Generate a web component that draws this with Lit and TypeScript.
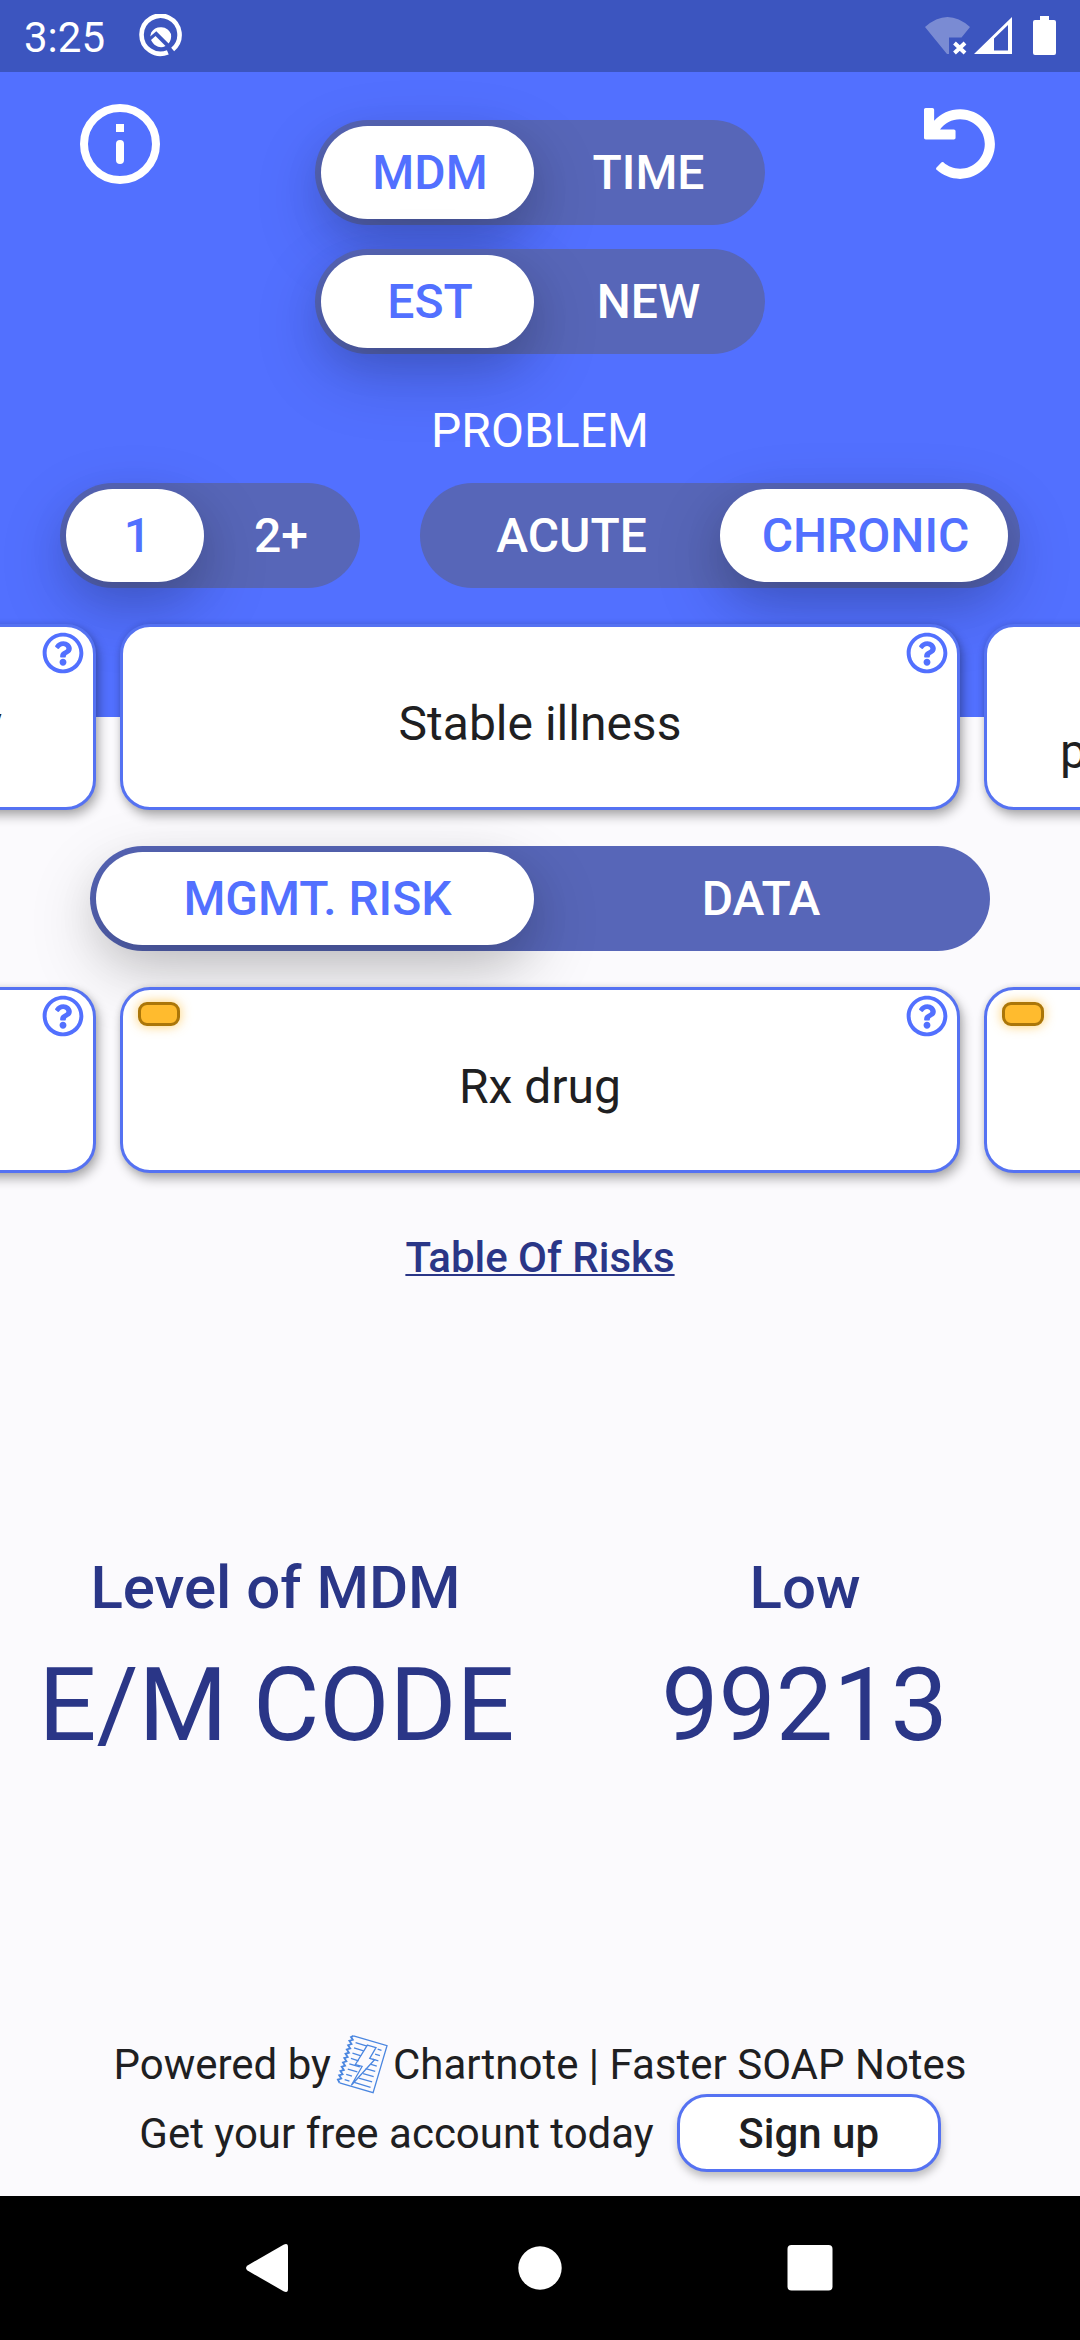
import { LitElement, html, css, svg } from "lit";
import { customElement, property } from "lit/decorators.js";
import { classMap } from "lit/directives/class-map.js";

const helpPath =
  "M256 8C119.043 8 8 119.083 8 256c0 136.997 111.043 248 248 248s248-111.003 248-248C504 119.083 392.957 8 256 8zm0 448c-110.532 0-200-89.431-200-200 0-110.495 89.472-200 200-200 110.491 0 200 89.471 200 200 0 110.53-89.431 200-200 200zm107.244-255.2c0 67.052-72.421 68.084-72.421 92.863V300c0 6.627-5.373 12-12 12h-45.647c-6.627 0-12-5.373-12-12v-8.659c0-35.745 27.1-50.034 47.579-61.516 17.561-9.845 28.324-16.541 28.324-29.579 0-17.246-21.999-28.693-39.784-28.693-23.189 0-33.894 10.977-48.942 29.969-4.057 5.12-11.46 6.071-16.666 2.124l-27.824-21.098c-5.107-3.872-6.251-11.066-2.644-16.363C184.846 131.491 214.94 112 261.794 112c49.071 0 101.45 38.304 101.45 88.8zM298 368c0 23.159-18.841 42-42 42s-42-18.841-42-42 18.841-42 42-42 42 18.841 42 42z";
const undoPath =
  "M212.333 224.333H12c-6.627 0-12-5.373-12-12V12C0 5.373 5.373 0 12 0h48c6.627 0 12 5.373 12 12v78.112C117.773 39.279 184.26 7.47 258.175 8.007c136.906.994 246.448 111.623 246.157 248.532C504.041 393.258 393.12 504 256.333 504c-64.089 0-122.496-24.313-166.51-64.215-5.099-4.622-5.334-12.554-.467-17.42l33.967-33.967c4.474-4.474 11.662-4.717 16.401-.525C170.76 415.336 211.58 432 256.333 432c97.268 0 176-78.716 176-176 0-97.267-78.716-176-176-176-58.496 0-110.28 28.476-142.274 72.333h98.274c6.627 0 12 5.373 12 12v48c0 6.627-5.373 12-12 12z";

@customElement("toggle-pill")
class TogglePill extends LitElement {
  @property() first = "";
  @property() second = "";
  @property() active = "first";
  @property() kind = "even";

  static styles = css`
    :host {
      display: block;
    }
    .track {
      box-sizing: border-box;
      height: 105px;
      border-radius: 52.5px;
      background: #5766b8;
      display: grid;
      grid-template-columns: 1fr 1fr;
      padding: 6px;
      column-gap: 12px;
      font-size: 48px;
      font-weight: 500;
      color: #fff;
    }
    .count {
      grid-template-columns: 138px 1fr;
    }
    .course {
      grid-template-columns: 1fr 288px;
      padding-right: 12px;
    }
    .option {
      display: flex;
      align-items: center;
      justify-content: center;
      border-radius: 46.5px;
      line-height: 56px;
      white-space: nowrap;
      padding-left: 5px;
    }
    .option + .option {
      padding-left: 0;
      padding-right: 8px;
    }
    .course .option {
      padding-left: 9px;
      padding-right: 0;
    }
    .course .option + .option {
      padding-left: 3px;
      padding-right: 0;
    }
    .on {
      background: #fff;
      color: #5270ff;
      box-shadow: 0 24px 72px rgba(0, 0, 0, 0.2), 0 14px 40px rgba(0, 0, 0, 0.1);
    }
  `;

  render() {
    const on = this.active === "first";
    return html`<div class=${classMap({ track: true, [this.kind]: true })}>
      <div class=${classMap({ option: true, on })}>${this.first}</div>
      <div class=${classMap({ option: true, on: !on })}>${this.second}</div>
    </div>`;
  }
}

@customElement("choice-card")
class ChoiceCard extends LitElement {
  @property() label = "";
  @property() align = "center";
  @property({ type: Boolean }) badge = false;
  @property({ type: Boolean }) help = false;

  static styles = css`
    :host {
      display: block;
    }
    .card {
      position: relative;
      box-sizing: border-box;
      width: 840px;
      height: 186px;
      border: 3px solid #5572f2;
      border-radius: 30px;
      background: #fff;
      box-shadow: 3px 6px 11px rgba(0, 0, 0, 0.3), 0 0 6px rgba(0, 0, 0, 0.1);
      display: flex;
      align-items: center;
      justify-content: center;
      padding-top: 14px;
      font-size: 48px;
      line-height: 56px;
      color: #1f1f22;
      white-space: nowrap;
    }
    .end {
      justify-content: flex-end;
      padding-right: 91px;
    }
    .start {
      justify-content: flex-start;
      padding-left: 73px;
      padding-top: 70px;
    }
    .help {
      position: absolute;
      right: 9px;
      top: 5px;
      width: 42px;
      height: 42px;
      fill: #5270ff;
    }
    .badge {
      position: absolute;
      box-sizing: border-box;
      left: 15px;
      top: 12px;
      width: 42px;
      height: 24px;
      border: 3px solid #ab7609;
      border-radius: 9px;
      background: #ffbb2e;
      box-shadow: 0 0 12px rgba(255, 187, 46, 0.7);
    }
  `;

  render() {
    return html`<div class=${classMap({ card: true, [this.align]: true })}>
      ${this.badge ? html`<span class="badge"></span>` : ""}
      <span>${this.label}</span>
      ${this.help ? html`<svg class="help" viewBox="0 0 512 512"><path d=${helpPath} /></svg>` : ""}
    </div>`;
  }
}

@customElement("app-root")
class AppRoot extends LitElement {
  static styles = css`
    :host {
      display: block;
      font-family: Roboto, "Liberation Sans", sans-serif;
    }
    .screen {
      box-sizing: border-box;
      width: 1080px;
      height: 2340px;
      overflow: hidden;
      display: flex;
      flex-direction: column;
      background: linear-gradient(#5270ff 717px, #fbfafd 717px);
      color: #1f1f22;
    }
    .status {
      flex: none;
      height: 72px;
      background: #3c55bf;
      display: flex;
      align-items: center;
      padding: 0 24px;
      color: #fff;
    }
    .time {
      font-size: 42px;
      line-height: 50px;
      padding-top: 3px;
      width: 114px;
    }
    .status svg {
      display: block;
    }
    .system {
      margin-left: auto;
    }
    .top {
      flex: none;
      height: 282px;
      display: grid;
      grid-template-columns: 315px 450px 315px;
    }
    .modes {
      padding-top: 48px;
      display: flex;
      flex-direction: column;
      gap: 24px;
    }
    .info {
      width: 80px;
      height: 80px;
      margin: 32px 0 0 80px;
    }
    .undo {
      width: 72px;
      height: 72px;
      margin: 35.5px 0 0 159px;
    }
    .heading {
      flex: none;
      height: 129px;
      box-sizing: border-box;
      padding-top: 49px;
      text-align: center;
      font-size: 48px;
      line-height: 56px;
      color: #fff;
    }
    .problem {
      flex: none;
      display: grid;
      grid-template-columns: 300px 600px;
      column-gap: 60px;
      padding: 0 60px;
    }
    .carousel {
      flex: none;
      display: flex;
      justify-content: center;
      gap: 24px;
      padding: 36px 0;
    }
    .carousel > * {
      flex: none;
    }
    .wide {
      flex: none;
      padding: 0 90px;
    }
    .risks {
      flex: none;
      text-align: center;
      font-size: 42px;
      font-weight: 500;
      line-height: 50px;
      color: #2a3687;
      text-decoration: underline;
      text-decoration-thickness: 2px;
      text-underline-offset: 2px;
      text-decoration-skip-ink: none;
      padding-top: 24px;
      padding-bottom: 269px;
    }
    .result {
      flex: none;
      display: grid;
      grid-template-columns: 551px 508px;
      text-align: center;
      color: #2a3687;
    }
    .level {
      font-size: 60px;
      font-weight: 500;
      line-height: 72px;
    }
    .code {
      font-size: 102px;
      line-height: 120px;
      padding-top: 21px;
      padding-left: 2px;
    }
    .value {
      padding-left: 0;
      padding-right: 1px;
    }
    .footer {
      margin-top: auto;
      flex: none;
      padding-bottom: 24px;
      font-size: 42px;
      line-height: 50px;
      white-space: nowrap;
    }
    .row {
      display: flex;
      align-items: center;
      justify-content: center;
    }
    .row > span {
      padding-top: 2px;
    }
    .logo {
      width: 54px;
      height: 60px;
      margin: 0 3px 0 5px;
    }
    .signup {
      box-sizing: border-box;
      width: 264px;
      height: 78px;
      margin-left: 23px;
      border: 3px solid #5572f2;
      border-radius: 30px;
      background: #fff;
      box-shadow: 1px 5px 9px rgba(0, 0, 0, 0.25);
      font-weight: 500;
      display: flex;
      align-items: center;
      justify-content: center;
      padding-top: 2px;
    }
    .nav {
      flex: none;
      height: 144px;
      background: #000;
      display: flex;
      justify-content: center;
    }
  `;

  render() {
    const stripes = [9, 14.5, 20, 25.5, 31, 36.5, 42, 47.5];
    const leftEnds = [17, 15, 14, 13, 16, 15, 11, 10];
    const rightStarts = [26, 25, 24, 24, 20, 19, 16, 13];
    return html`<div class="screen">
      <div class="status">
        <div class="time">3:25</div>
        <svg width="44" height="44" viewBox="0 0 44 44">
          <path d="M36 34 A19 19 0 1 0 31.5 37.4" transform="rotate(6 22 22)" fill="none" stroke="#fff" stroke-width="4.6" />
          <path d="M13.2 18.4 A11.3 11.3 0 0 1 33 20 C33.6 24 32.6 27.200 30.600 29.400 L18.300 17.200 L12.200 22.600 Z" fill="#fff" />
          <path d="M13 26 L17.500 22 L27.500 32 C22 35 16 32 13 26 Z" fill="#fff" />
        </svg>
        <svg class="system" width="134" height="40" viewBox="922 16 134 40">
          <path d="M925 27 Q947.500 7 970 27 L961.500 37.500 H949 V54 H947 Z" fill="#fff" opacity=".32" />
          <path d="M954.500 43 L965 53 M965 43 L954.500 53" stroke="#fff" stroke-width="4" />
          <path fill-rule="evenodd" d="M974 54 L1012 17 V54 Z M994 38.500 V50.500 H1008 V25 Z" fill="#fff" />
          <path d="M1040 16 H1049 V20 H1054 Q1056 20 1056 22 V53 Q1056 55 1054 55 H1035 Q1033 55 1033 53 V22 Q1033 20 1035 20 H1040 Z" fill="#fff" />
        </svg>
      </div>

      <div class="top">
        <svg class="info" viewBox="0 0 80 80">
          <circle cx="40" cy="40" r="36" fill="none" stroke="#fff" stroke-width="8" />
          <rect x="36" y="20" width="8" height="8" fill="#fff" />
          <rect x="36" y="36" width="8" height="24" rx="4" fill="#fff" />
        </svg>
        <div class="modes">
          <toggle-pill first="MDM" second="TIME"></toggle-pill>
          <toggle-pill first="EST" second="NEW"></toggle-pill>
        </div>
        <svg class="undo" viewBox="0 0 512 512"><path d=${undoPath} fill="#fff" /></svg>
      </div>

      <div class="heading">PROBLEM</div>
      <div class="problem">
        <toggle-pill kind="count" first="1" second="2+"></toggle-pill>
        <toggle-pill kind="course" first="ACUTE" second="CHRONIC" active="second"></toggle-pill>
      </div>

      <div class="carousel">
        <choice-card label="y" align="end" help></choice-card>
        <choice-card label="Stable illness" help></choice-card>
        <choice-card label="p" align="start"></choice-card>
      </div>

      <div class="wide">
        <toggle-pill first="MGMT. RISK" second="DATA"></toggle-pill>
      </div>

      <div class="carousel">
        <choice-card help></choice-card>
        <choice-card label="Rx drug" badge help></choice-card>
        <choice-card badge></choice-card>
      </div>

      <div class="risks">Table Of Risks</div>

      <div class="result">
        <div class="level">Level of MDM</div>
        <div class="level">Low</div>
        <div class="code">E/M CODE</div>
        <div class="code value">99213</div>
      </div>

      <div class="footer">
        <div class="row">
          <span>Powered by</span>
          <svg class="logo" viewBox="0 0 54 60" fill="none" stroke="#4a86e0" stroke-width="1.3">
            <g transform="translate(16.500 1.500) rotate(16.500)">
              <path d="M1 0 H36 V49 H1" />
              <path d="M1 0 l-2 2 2.500 2 -3 2 3 2.500 -3 2 3 2.500 -3 2 3 2.500 -3 2 3 2.500 -3 2 3 2.500 -3 2 3 2.500 -3 2 3 2.500 -3 2 3 2.500 -3 2 3 2.500 -3 2 2.500 2.500" stroke-width="1.800" />
              <path d="M17 5 H26 L23 17 H28 L13 48 L18 27 H11 Z" />
              ${stripes.map((y, i) => svg`<path d="M5 ${y - 3} H${leftEnds[i]} M${rightStarts[i] + 2} ${y - 3} H32" />`)}
            </g>
          </svg>
          <span>Chartnote | Faster SOAP Notes</span>
        </div>
        <div class="row">
          <span>Get your free account today</span>
          <div class="signup">Sign up</div>
        </div>
      </div>

      <div class="nav">
        <svg width="1080" height="144" viewBox="0 0 1080 144" fill="#fff">
          <path d="M247.500 69.500 L283.500 48.800 Q288 46.500 288 51 V93 Q288 97.500 283.500 95.200 L247.500 74.500 Q244.500 72 247.500 69.500 Z" />
          <circle cx="540" cy="72" r="21.700" />
          <rect x="787.500" y="49" width="45" height="45.500" rx="4" />
        </svg>
      </div>
    </div>`;
  }
}
